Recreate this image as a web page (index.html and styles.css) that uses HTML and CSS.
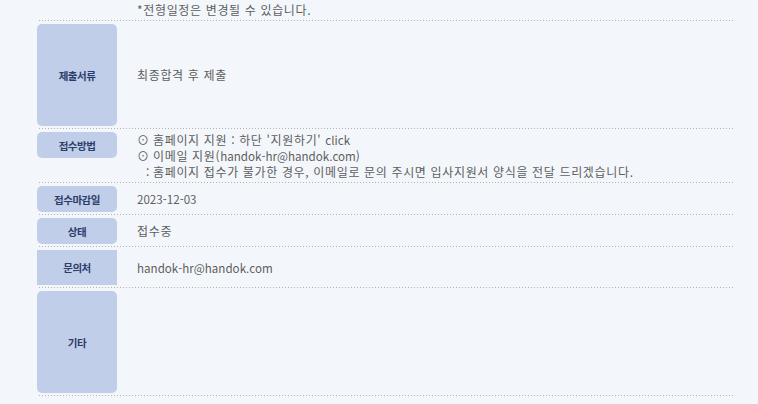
FILE: index.html
```html
<!DOCTYPE html>
<html lang="ko">
<head>
<meta charset="utf-8">
<title>채용 안내</title>
<link rel="stylesheet" href="styles.css">
</head>
<body>
<div class="board">
  <div class="row note">
    <div class="label-empty"></div>
    <div class="content">*전형일정은 변경될 수 있습니다.</div>
  </div>
  <div class="row">
    <div class="label tall">제출서류</div>
    <div class="content">최종합격 후 제출</div>
  </div>
  <div class="row">
    <div class="label">접수방법</div>
    <div class="content">
      <div><span class="mark">⊙</span>홈페이지 지원 : 하단 '지원하기' <span class="en">click</span></div>
      <div><span class="mark">⊙</span>이메일 지원(<span class="en">handok-hr@handok.com</span>)</div>
      <div><span class="mark colon">:</span>홈페이지 접수가 불가한 경우, 이메일로 문의 주시면 입사지원서 양식을 전달 드리겠습니다.</div>
    </div>
  </div>
  <div class="row">
    <div class="label">접수마감일</div>
    <div class="content"><span class="en">2023-12-03</span></div>
  </div>
  <div class="row">
    <div class="label">상태</div>
    <div class="content">접수중</div>
  </div>
  <div class="row">
    <div class="label square">문의처</div>
    <div class="content"><span class="en">handok-hr@handok.com</span></div>
  </div>
  <div class="row">
    <div class="label tall">기타</div>
    <div class="content"></div>
  </div>
</div>
</body>
</html>
```
FILE: styles.css
```css
html, body {
  margin: 0;
  padding: 0;
  background: #f3f7fb;
}

body {
  font-family: "Noto Sans CJK KR", "Noto Sans", sans-serif;
  font-size: 12px;
  color: #5e5e5e;
}

.board {
  margin-left: 37px;
  width: 698px;
}

.row {
  display: grid;
  grid-template-columns: 80px 1fr;
  column-gap: 20px;
  padding: 3px 0;
  background-image: linear-gradient(to right, #b3b3b3 1px, transparent 1px);
  background-size: 3px 1px;
  background-repeat: repeat-x;
  background-position: 2px bottom;
}

.row.note {
  padding-top: 2px;
}

.label {
  align-self: start;
  height: 26px;
  display: flex;
  align-items: center;
  justify-content: center;
  background: #c1cee9;
  border-radius: 5px;
  color: #2c3d6b;
  font-weight: bold;
  font-size: 10.5px;
  letter-spacing: -0.5px;
}

.label.tall {
  height: 102px;
}

.label.square {
  height: 35px;
  border-radius: 0;
}

.content {
  align-self: center;
  line-height: 16px;
  white-space: nowrap;
  letter-spacing: 0.65px;
}

.en {
  letter-spacing: 0;
  font-size: 11.6px;
}

.mark {
  display: inline-block;
  width: 16px;
  letter-spacing: 0;
}

.mark.colon {
  padding-left: 9px;
  width: 7px;
}
```
